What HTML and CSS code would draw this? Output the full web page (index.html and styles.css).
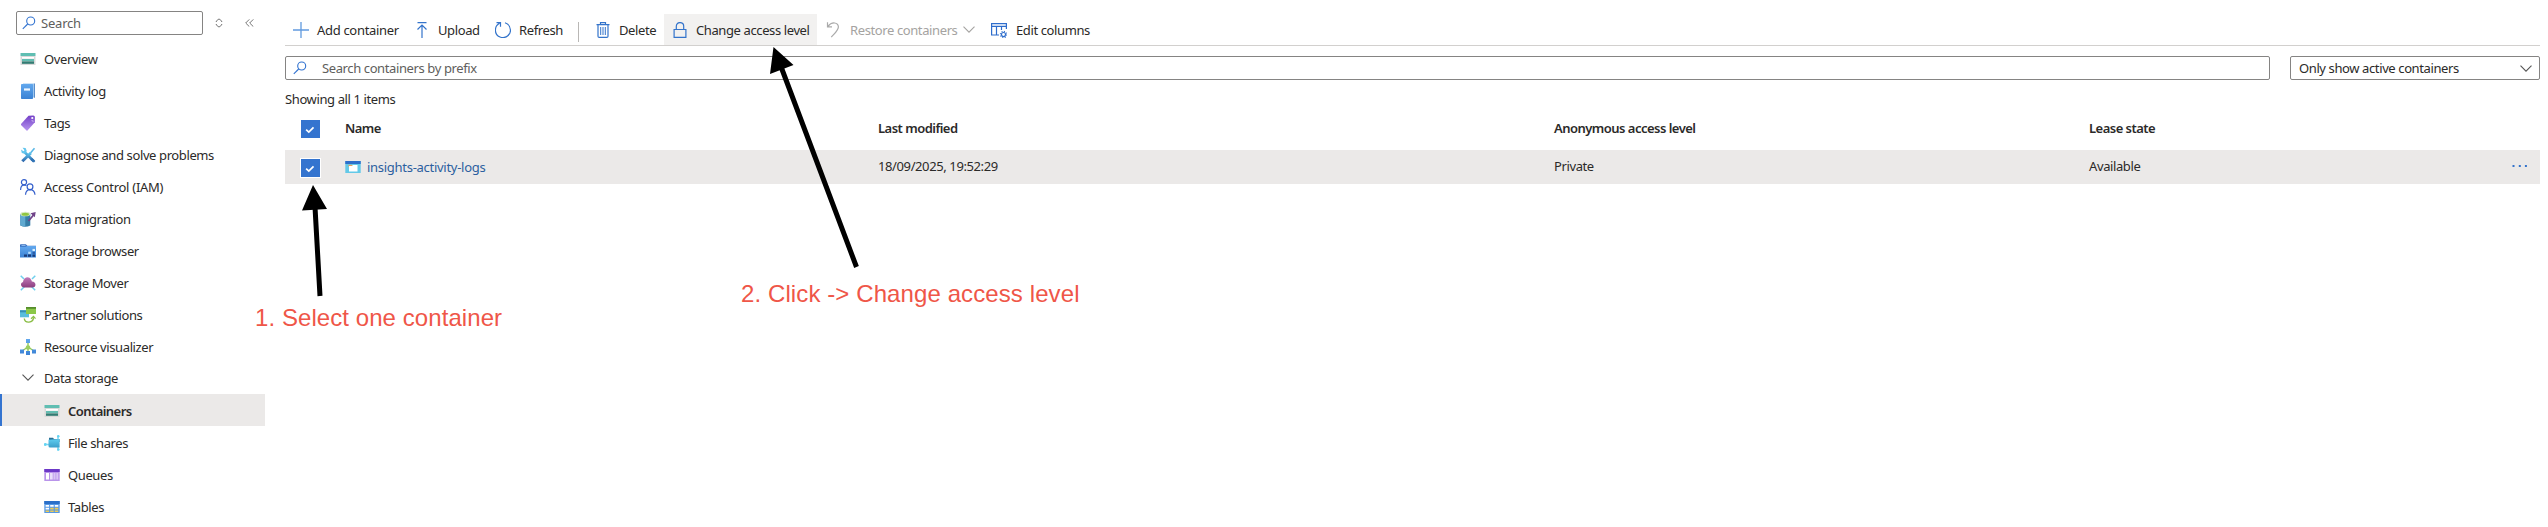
FILE: index.html
```html
<!DOCTYPE html>
<html lang="en">
<head>
<meta charset="utf-8">
<title>Containers</title>
<link rel="stylesheet" href="styles.css">
</head>
<body>
<svg class="defs" width="0" height="0" aria-hidden="true">
  <defs>
    <linearGradient id="gBlue" x1="0" y1="0" x2="0" y2="1"><stop offset="0" stop-color="#62a8ee"/><stop offset="1" stop-color="#3b82d4"/></linearGradient>
    <linearGradient id="gPurple" x1="0" y1="0" x2="0" y2="1"><stop offset="0" stop-color="#7440c8"/><stop offset="1" stop-color="#b795ee"/></linearGradient>
    <linearGradient id="gPink" x1="0" y1="0" x2="0" y2="1"><stop offset="0" stop-color="#c078b8"/><stop offset="1" stop-color="#8c3f7e"/></linearGradient>
    <linearGradient id="gCyan" x1="0" y1="0" x2="0" y2="1"><stop offset="0" stop-color="#5ecdf0"/><stop offset="1" stop-color="#3b9fca"/></linearGradient>
    <linearGradient id="gTool" x1="0" y1="0" x2="0" y2="1"><stop offset="0" stop-color="#5cc6ee"/><stop offset="1" stop-color="#2f68ad"/></linearGradient>
    <symbol id="storage" viewBox="0 0 16 16">
      <path fill="#d9d9d9" d="M.5 5h15v9H.5z"/><path fill="#60beb2" d="M.5 2h15v3H.5z"/>
      <path fill="#fff" d="M2 6h12v1.700H2z"/><path fill="#62bdb1" d="M2 8h12v2.100H2z"/><path fill="#327c73" d="M2 10.400h12v2.400H2z"/>
    </symbol>
    <symbol id="lens" viewBox="0 0 14 14"><g fill="none" stroke="#3273d0" stroke-width="1.1"><circle cx="8.7" cy="5" r="4"/><path d="M5.7 8 .8 12.8"/></g></symbol>
    <symbol id="chev" viewBox="0 0 12 7"><path d="m.5.6 5.5 5.5L11.5.6" fill="none" stroke="currentColor" stroke-width="1.1"/></symbol>
    <symbol id="check" viewBox="0 0 20 19"><path d="m5.4 10.2 2.8 2.6 5-5.1" fill="none" stroke="#fff" stroke-width="1.8"/></symbol>
  </defs>
</svg>
<div class="app">
  <nav class="side">
    <div class="side-top">
      <div class="search"><svg class="lens"><use href="#lens"/></svg><span>Search</span></div>
      <svg class="sort" viewBox="0 0 8 10"><path d="M1.300 4V3L4 .9 6.700 3v1M1.300 6v1L4 9.100 6.700 7V6" fill="none" stroke="#777" stroke-width="1"/></svg>
      <svg class="collapse" viewBox="0 0 9 8"><path d="M4.3.4.7 4l3.6 3.6M8.3.4 4.7 4l3.6 3.6" fill="none" stroke="#666" stroke-width=".9"/></svg>
    </div>
    <ul class="menu">
      <li><svg viewBox="0 0 16 16"><use href="#storage"/></svg><span>Overview</span></li>
      <li><svg viewBox="0 0 16 16"><path fill="#9dc7ef" d="M3 .5h11v14H3z"/><path fill="#3272bd" d="M14 .5h.8v14.3H14z"/><rect x="1" y="1" width="12" height="15" rx=".8" fill="url(#gBlue)"/><path fill="#eef6ff" d="M4 5.4h6V7.600H4z"/></svg><span>Activity log</span></li>
      <li><svg viewBox="0 0 16 16"><path fill="url(#gPurple)" d="M1 9 8.500.8l4.800-.3q1.500 0 1.600 1.500v5.300L7.500 15.500Q7 16 6.500 15.500L1 10z"/><circle cx="12.300" cy="3" r="1.100" fill="#fff"/><path d="m11.600 5.700 2 .5" stroke="#d6c5f4"/></svg><span>Tags</span></li>
      <li><svg viewBox="0 0 16 16"><path d="M4 4.500 14 14.500" stroke="url(#gTool)" stroke-width="2.600"/><path fill="#62c6ee" d="M2.500.8 5.600.9l1.200 3.200-2 2.600-3-.7L1 2.500l2.500 1.800 1-1z"/><path d="m10.500 6 4-4.700" stroke="#58b7e6" stroke-width="1.600"/><path d="M10.800 6 2.300 14.300" stroke="url(#gTool)" stroke-width="3"/><path fill="#2f73b5" d="m12 11 3.300 3-1.300 1.500L10.500 13z"/></svg><span>Diagnose and solve problems</span></li>
      <li><svg viewBox="0 0 16 16"><g fill="none" stroke="#3560cc" stroke-width="1.200"><circle cx="4" cy="3.200" r="2.600"/><path d="M.6 11q0-4.700 3.300-5.100 1.800 0 2.500.8"/><circle cx="10" cy="7.800" r="2.900"/><path d="M5.500 15.800q.4-5 4.500-5.100 4.600.2 5 5.100"/></g></svg><span class="wide">Access Control (IAM)</span></li>
      <li><svg viewBox="0 0 16 16"><path fill="#377ea8" d="M.3 3h10v11.500q-5 2.600-10 0z"/><path fill="#60a9d0" d="M.3 3h5v12.600q-3 0-5-1.300z"/><ellipse cx="5.300" cy="3" rx="5" ry="2.300" fill="#d9e9c5"/><ellipse cx="5.300" cy="3.200" rx="3.700" ry="1.500" fill="#8fc640"/><path d="m8.500 10 5-6" stroke="#704389" stroke-width="1.800"/><path fill="#704389" d="m10.500 2.200 5.200-1.100-.9 5.200z"/></svg><span>Data migration</span></li>
      <li><svg viewBox="0 0 16 16"><path fill="#386fc0" d="M0 2q0-.8.800-.8h5L7.500 2.700H16v5H0z"/><path fill="#9cc8f6" d="M1.500 2h4v.8h-4z"/><path fill="url(#gBlue)" d="M0 3.800h5.500L7.300 3H16v11.500H0z"/><path fill="#193b79" d="M4 11.500h3v2.300H4zM8 11.500h3v2.300H8zM12.500 11.500h2.500v2.300h-2.500z"/><path fill="#b3dcfc" d="M8.200 8.700h2.600v2.200H8.200z"/><path fill="#295ca9" d="M12.500 8.700h2.500v2.200h-2.500z"/><path fill="#d9efff" d="M12.500 5.900h2.500v2.200h-2.500z"/></svg><span>Storage browser</span></li>
      <li><svg viewBox="0 0 16 16"><path d="M.7.700 4 4M15.300.7 12 4M.8 15.200 5 11M15.200 15.200 11 11" stroke="#70cfed" stroke-width="1.500"/><path fill="url(#gPink)" d="M4.300 12.500C.2 12.500 0 7.700 3 7 3.500 2.300 9 .6 11 4.500q.7 1 .8 2c4.800 0 4.800 6 .6 6z"/></svg><span>Storage Mover</span></li>
      <li><svg viewBox="0 0 16 16"><path fill="#58bddc" d="M0 3.300h9v7H0z"/><path fill="#368db3" d="M0 3.300h9v2H0z"/><path fill="#8bc849" d="M6 0h10v7H6z"/><path fill="#568d2b" d="M6 0h10v1.800H6z"/><path d="M4.300 11.500c.5 5 9 5 9.200-1.200" fill="none" stroke="#8abd45" stroke-width="1.400"/><path d="m11 11.700 2.500-2.300 2 2.300" fill="none" stroke="#8abd45" stroke-width="1.200"/></svg><span>Partner solutions</span></li>
      <li><svg viewBox="0 0 16 16"><g stroke="#92c957" stroke-width="1.400" fill="none"><path d="M8 3v10M8 8l-6 4M8 8l6 4"/></g><circle cx="8" cy="8.500" r="2.300" fill="#9cce60"/><path fill="url(#gBlue)" d="M6 0h4v4H6zM0 10.500h4v4H0zM6 12h4v4H6zM12 10.500h4v4h-4z"/></svg><span>Resource visualizer</span></li>
      <li class="group"><svg class="gchev" viewBox="0 0 12 7"><use href="#chev"/></svg><span>Data storage</span></li>
      <li class="sub active"><svg viewBox="0 0 16 16"><use href="#storage"/></svg><span>Containers</span></li>
      <li class="sub"><svg viewBox="0 0 16 16"><path d="M0 9.500h5m9-5V.4m0 11v4.200" stroke="#80d5ef" stroke-width="1.500"/><circle cx="1.300" cy="9.500" r="1.400" fill="#63d4f3"/><circle cx="14.300" cy="1.200" r="1.200" fill="#63d4f3"/><circle cx="14.300" cy="14.500" r="1.300" fill="#63d4f3"/><path fill="#2a7196" d="M5 2.700h4l1 1.200h5.600v3H5z"/><path fill="url(#gCyan)" d="M4.500 4.800 15.600 4v8.500H6q-1.500 0-1.500-1.500z"/></svg><span>File shares</span></li>
      <li class="sub"><svg viewBox="0 0 16 16"><path fill="#b994ea" d="M.3 2h15.400v12H.3z"/><path fill="#6c38c7" d="M.3 2h15.400v3H.3z"/><path fill="#fff" d="M2 6h3v6.500H2z"/><path fill="#eadffa" d="M6 6h2.700v6.500H6z"/><path fill="#d9c5f5" d="M9.500 6h2v6.500h-2zM12.300 6h1.900v6.500h-1.900z"/></svg><span>Queues</span></li>
      <li class="sub"><svg viewBox="0 0 16 16"><path fill="#5799e5" d="M.3 2h15.400v12H.3z"/><path fill="#2a6fc8" d="M.3 2h15.400v3H.3z"/><path fill="#fff" d="M1.600 6h3.500v1.700H1.600zM6.200 6h3.500v1.700H6.200zM10.800 6h3.500v1.700h-3.500zM1.600 8.700h3.500v1.700H1.600z"/><path fill="#eecb55" d="M6.200 8.700h3.500v1.700H6.200zM10.800 8.700h3.500v1.700h-3.500zM1.600 11.400h3.500V13H1.600zM6.200 11.400h3.500V13H6.200zM10.800 11.400h3.500V13h-3.500z"/></svg><span>Tables</span></li>
    </ul>
  </nav>

  <main class="main">
    <div class="toolbar">
      <div class="cmd add"><svg viewBox="0 0 16 16"><path d="M8 0v16M0 8h16" stroke="#619bdf" stroke-width="1.300"/></svg><span>Add container</span></div>
      <div class="cmd upload"><svg viewBox="0 0 16 16"><path d="M3.500.6h9M8 16V3M3.500 7.500 8 3l4.500 4.500" fill="none" stroke="#3474cb" stroke-width="1.200"/></svg><span>Upload</span></div>
      <div class="cmd refresh"><svg viewBox="0 0 16 16"><path d="M4.600 1.200C-.9 4-1.200 12.600 5 15c5.600 2.200 11-2.300 10.400-7.300C15.100 4 12.700 1.700 10 .8M1.500.7h4v4" fill="none" stroke="#3474cb" stroke-width="1.200"/></svg><span>Refresh</span></div>
      <div class="divider"></div>
      <div class="cmd delete"><svg viewBox="0 0 16 16"><path d="M1.500 2.600h13M5.500 2.500V.6h5v1.900M3 2.600v11.600q0 1.200 1.200 1.200h7.600q1.200 0 1.200-1.200V2.600" fill="none" stroke="#3474cb" stroke-width="1.200"/><path d="M5.700 5v8M8 5v8m2.300-8v8" stroke="#3474cb"/></svg><span>Delete</span></div>
      <div class="cmd access"><svg viewBox="0 0 16 16"><path d="M2.100 7.500h11.800v7.900H2.100zM4.300 7.500V4.300c0-5 7.400-5 7.400 0v3.200" fill="none" stroke="#3474cb" stroke-width="1.200"/></svg><span>Change access level</span></div>
      <div class="cmd restore"><svg viewBox="0 0 16 16"><path d="M2.500.3v4.500H7M2.700 4.600C7-.9 13 .4 13.400 4.700c.3 3.300-4.400 7.300-7.100 10.500" fill="none" stroke="#aaa" stroke-width="1.200"/></svg><span>Restore containers</span><svg class="rchev" viewBox="0 0 12 7"><use href="#chev"/></svg></div>
      <div class="cmd columns"><svg viewBox="0 0 16 16"><path d="M8 13H.6V1.600h14.800V7M.6 4.300h14.800M5.500 4.300V13m5-8.700V8" fill="none" stroke="#2e6dcc" stroke-width="1.200"/><circle cx="12.500" cy="12.500" r="2" fill="none" stroke="#2e6dcc" stroke-width="1.100"/><circle cx="12.500" cy="12.500" r="3.100" fill="none" stroke="#2e6dcc" stroke-width="1.100" stroke-dasharray="1.100 1.335"/></svg><span>Edit columns</span></div>
    </div>
    <div class="filters">
      <div class="search"><svg class="lens"><use href="#lens"/></svg><span>Search containers by prefix</span></div>
      <div class="select"><span>Only show active containers</span><svg class="schev" viewBox="0 0 12 7"><use href="#chev"/></svg></div>
    </div>
    <p class="count">Showing all 1 items</p>
    <div class="row head">
      <div class="box"><svg viewBox="0 0 20 19"><use href="#check"/></svg></div>
      <span>Name</span><span>Last modified</span><span>Anonymous access level</span><span>Lease state</span>
    </div>
    <div class="row item">
      <div class="box"><svg viewBox="0 0 20 19"><use href="#check"/></svg></div>
      <div class="name"><svg viewBox="0 0 16 16"><path fill="#63c9e8" d="M.3 2h15.400v12H.3z"/><path fill="#2c6ecb" d="M.3 2h15.400v3H.3z"/><path fill="#eaa15c" d="M3.500 5.800h4v2h-4z"/><path fill="#fff" d="M4 7h8.500v5.500H4zM7.500 6h5v2h-5z"/></svg><a class="wide">insights-activity-logs</a></div>
      <span>18/09/2025, 19:52:29</span><span>Private</span><span>Available</span>
      <svg class="more" viewBox="0 0 16 2"><path fill="#3474cb" d="M.5 0h2v2h-2zM6.800 0h2v2h-2zM12.900 0h2v2h-2z"/></svg>
    </div>
  </main>
</div>

<svg class="arrows" viewBox="0 0 2548 527" aria-hidden="true">
  <path d="m315 207 5 89M781.500 68l75 199" stroke="#000" stroke-width="5"/>
  <path d="m313 185 14 24-25 1.500zM773.500 47 793.500 65 770 74z"/>
</svg>
<div class="note one">1. Select one container</div>
<div class="note two">2. Click -&gt; Change access level</div>
</body>
</html>
```

FILE: styles.css
```css
* { box-sizing: border-box; }
body { margin: 0; background: #fff; color: #2b2a29; font: 13px/18px "Noto Sans", "Open Sans", sans-serif; letter-spacing: -.39px; white-space: nowrap; }
svg { display: block; flex: none; }
.defs { position: absolute; }
.wide { letter-spacing: -.28px; }
.app { display: flex; height: 527px; overflow: hidden; }

.side { width: 265px; flex: none; }
.side-top { display: flex; align-items: center; height: 43px; padding: 11px 0 8px 16px; }
.search { display: flex; align-items: center; height: 24px; border: 1px solid #858483; border-radius: 2px; color: #605e5c; }
.side .search { width: 187px; padding-left: 5px; letter-spacing: -.2px; }
.lens { width: 14px; height: 14px; }
.side .lens { margin-right: 5px; }
.sort { width: 8px; height: 10px; margin-left: 12px; }
.collapse { width: 9px; height: 8px; margin-left: 22px; }

.menu { list-style: none; margin: 0; padding: 0; }
.menu li { display: flex; align-items: center; gap: 8px; height: 32px; padding-left: 20px; }
.menu li svg { width: 16px; height: 16px; }
.menu .group { height: 31px; padding-bottom: 2px; }
.menu li .gchev { width: 12px; height: 7px; margin: 0 2px; }
.gchev, .schev { color: #555; }
.menu .sub { padding: 2px 0 0 44px; }
.menu .active { background: #ebe9e8; box-shadow: inset 2px 0 #3474d0; font-weight: 600; letter-spacing: -.55px; }

.main { width: 2255px; margin-left: 20px; }
.toolbar { display: flex; height: 46px; padding-top: 14px; border-bottom: 1px solid #d2d0ce; }
.cmd { display: flex; flex: none; align-items: center; gap: 8px; height: 31px; padding-left: 8px; }
.cmd svg { width: 16px; height: 16px; }
.add { width: 121px; letter-spacing: -.31px; }
.upload { width: 81px; }
.refresh { width: 91px; }
.divider { width: 1px; height: 20px; margin-top: 8px; background: #b9b7b5; }
.delete { width: 85px; padding-left: 16px; }
.access { width: 153px; background: #f2f1f0; }
.restore { width: 165px; color: #a5a3a1; gap: 9px; }
.restore span { width: 104px; }
.restore .rchev { width: 12px; height: 7px; }
.columns { padding-left: 9px; gap: 9px; }

.filters { display: flex; gap: 20px; padding-top: 10px; }
.filters .search { width: 1985px; padding-left: 7px; }
.filters .lens { margin-right: 15px; }
.select { display: flex; align-items: center; justify-content: space-between; width: 250px; height: 24px; padding: 0 7px 0 8px; border: 1px solid #858483; border-radius: 2px; }
.schev { width: 12px; height: 7px; }
.count { margin: 10px 0 0; height: 18px; }

.row { display: grid; grid-template-columns: 44px 533px 676px 535px 422px 1fr; align-items: center; padding-left: 16px; }
.row > span { padding-bottom: 2px; }
.head { height: 42px; font-weight: 600; letter-spacing: -.52px; }
.item { height: 34px; background: #ebe9e8; }
.box { width: 19px; height: 18px; background: #3474cf; }
.item .box { margin-top: 2px; box-shadow: 0 0 0 1px #fff; }
.box svg { width: 19px; height: 18px; }
.name { display: flex; align-items: center; gap: 6px; }
.name svg { width: 16px; height: 16px; }
.name a { color: #2b5f9f; }
.more { width: 16px; height: 2px; margin: -2px 0 0 1px; }

.arrows { position: absolute; left: 0; top: 0; width: 2548px; height: 527px; }
.note { position: absolute; color: #ef5648; font: 24px/28px "Liberation Sans", Arial, sans-serif; }
.one { left: 255px; top: 304px; letter-spacing: .07px; }
.two { left: 741px; top: 280px; letter-spacing: .1px; }
```
